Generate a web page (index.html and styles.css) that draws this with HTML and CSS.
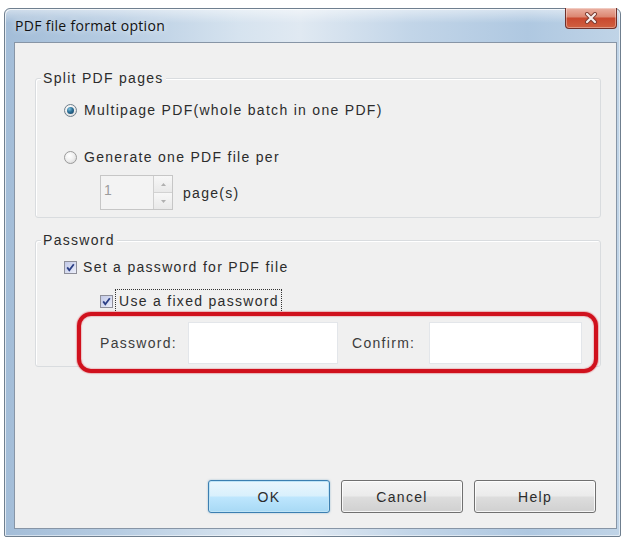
FILE: index.html
```html
<!DOCTYPE html>
<html lang="en">
<head>
<meta charset="utf-8">
<title>PDF file format option</title>
<link rel="stylesheet" href="styles.css">
</head>
<body>
<div class="window">
  <div class="titlebar">
    <span class="title">PDF file format option</span>
    <span class="close">
      <svg width="16" height="12" viewBox="0 0 16 12">
        <path d="M4 2 L12 10 M12 2 L4 10" stroke="#7a3a30" stroke-width="4" stroke-linecap="round"/>
        <path d="M4 2 L12 10 M12 2 L4 10" stroke="#f6eeee" stroke-width="2.2" stroke-linecap="round"/>
      </svg>
    </span>
  </div>
  <div class="client">
    <div class="group split">
      <div class="legend">Split PDF pages</div>
      <div class="opt first">
        <span class="radio on"></span>
        <span>Multipage PDF(whole batch in one PDF)</span>
      </div>
      <div class="opt second">
        <span class="radio"></span>
        <span>Generate one PDF file per</span>
      </div>
      <div class="spinrow">
        <div class="spin">
          <span class="val">1</span>
          <span class="arrows">
            <span class="half"><svg width="5" height="3" viewBox="0 0 5 3"><path d="M0 3 L2.5 0 L5 3 Z" fill="#b0b0b0"/></svg></span>
            <span class="half"><svg width="5" height="3" viewBox="0 0 5 3"><path d="M0 0 L2.5 3 L5 0 Z" fill="#b0b0b0"/></svg></span>
          </span>
        </div>
        <span class="pages">page(s)</span>
      </div>
    </div>
    <div class="group pw">
      <div class="legend">Password</div>
      <div class="opt chk1">
        <span class="check"><svg width="11" height="11" viewBox="0 0 11 11"><path d="M2.2 5.4 L4.3 8.2 L8.8 2.2" fill="none" stroke="#2b3f86" stroke-width="1.8"/></svg></span>
        <span>Set a password for PDF file</span>
      </div>
      <div class="opt chk2">
        <span class="check"><svg width="11" height="11" viewBox="0 0 11 11"><path d="M2.2 5.4 L4.3 8.2 L8.8 2.2" fill="none" stroke="#2b3f86" stroke-width="1.8"/></svg></span>
        <span class="focus">Use a fixed password</span>
      </div>
      <div class="pwrow">
        <span class="lbl lbl-pw">Password:</span>
        <span class="field field-pw"></span>
        <span class="lbl lbl-cf">Confirm:</span>
        <span class="field field-cf"></span>
      </div>
    </div>
    <div class="buttons">
      <button class="btn default" type="button">OK</button>
      <button class="btn" type="button">Cancel</button>
      <button class="btn" type="button">Help</button>
    </div>
  </div>
</div>
</body>
</html>
```
FILE: styles.css
```css
html, body {
  margin: 0;
  padding: 0;
  background: #ffffff;
}

body {
  width: 626px;
  height: 540px;
  overflow: hidden;
  font-family: "Liberation Sans", Arial, sans-serif;
}

.window {
  margin: 8px 0 0 4px;
  width: 617px;
  height: 529px;
  box-sizing: border-box;
  border: 1px solid #6f7f8f;
  border-radius: 6px 6px 2px 2px;
  padding: 0 3px 7px 9px;
  display: flex;
  flex-direction: column;
  background:
    linear-gradient(180deg, rgba(255,255,255,0.5) 0px, rgba(255,255,255,0) 14px),
    linear-gradient(90deg, #a3bdd8 0%, #b6cce2 18%, #d6e3ef 38%, #e0e9f2 48%, #c2d5e8 66%, #afc8e1 85%, #c0d4e7 100%);
  box-shadow: inset 1px 1px 0 rgba(255,255,255,0.7), inset -1px -1px 0 rgba(255,255,255,0.5);
}

.titlebar {
  height: 33px;
  display: flex;
  justify-content: space-between;
  align-items: flex-start;
}

.title {
  padding-left: 1px;
  line-height: 33px;
  font-family: "Open Sans", "Noto Sans", sans-serif;
  font-size: 14px;
  letter-spacing: 0.3px;
  color: #111;
  text-shadow: 0 0 6px rgba(255,255,255,0.9);
}

.close {
  margin: -1px 0 0 0;
  width: 52px;
  height: 21px;
  box-sizing: border-box;
  border: 1px solid #70302a;
  border-top: none;
  border-radius: 0 0 4px 4px;
  background: linear-gradient(180deg, #eab1a3 0%, #dc8671 45%, #c9482f 50%, #d06040 100%);
  box-shadow: inset 0 0 0 1px rgba(255,255,255,0.35);
  display: flex;
  align-items: center;
  justify-content: center;
}

.client {
  flex: 1;
  border: 1px solid #8795a6;
  background: #f0f0f0;
  display: flex;
  flex-direction: column;
  font-size: 14px;
  letter-spacing: 1.3px;
  color: #2c2c2c;
}

.group {
  margin-left: 20px;
  width: 566px;
  box-sizing: border-box;
  border: 1px solid #d9dcdf;
  border-radius: 3px;
  box-shadow: inset 1px 1px 0 #ffffff;
  padding-left: 28px;
}

.split {
  margin-top: 35px;
  padding-bottom: 7px;
}

.pw {
  margin-top: 22px;
  padding-bottom: 0;
}

.legend {
  display: block;
  width: max-content;
  margin: -9px 0 0 -23px;
  padding: 0 2px;
  line-height: 16px;
  height: 16px;
  background: #f0f0f0;
}

.opt {
  display: flex;
  align-items: center;
  height: 20px;
  line-height: 20px;
  white-space: nowrap;
}

.opt.first { margin-top: 14px; }
.opt.second { margin-top: 27px; }
.opt.chk1 { margin-top: 9px; }
.opt.chk2 { margin-top: 14px; padding-left: 36px; }

.radio {
  width: 13px;
  height: 13px;
  box-sizing: border-box;
  border-radius: 50%;
  border: 1px solid #9a9a9a;
  background: radial-gradient(circle at 40% 35%, #ffffff 0%, #f0f0f0 45%, #d2d2d2 100%);
  margin-right: 7px;
  display: flex;
  align-items: center;
  justify-content: center;
  flex: none;
}

.radio.on {
  border-color: #6f7f8c;
}

.radio.on::after {
  content: "";
  width: 7px;
  height: 7px;
  border-radius: 50%;
  background: radial-gradient(circle at 35% 30%, #7fc3e0 0%, #2c6f96 45%, #133a5a 100%);
}

.spinrow {
  margin-top: 8px;
  padding-left: 36px;
  display: flex;
  align-items: center;
  height: 35px;
}

.spin {
  width: 73px;
  height: 35px;
  box-sizing: border-box;
  border: 1px solid #c6c6c6;
  background: #f3f3f3;
  display: flex;
}

.val {
  flex: 1;
  color: #9c9c9c;
  padding: 6px 0 0 3px;
  line-height: 16px;
}

.arrows {
  width: 18px;
  display: flex;
  flex-direction: column;
  border-left: 1px solid #cfcfcf;
}

.half {
  flex: 1;
  display: flex;
  align-items: center;
  justify-content: center;
  background: linear-gradient(180deg, #f7f7f7, #e9e9e9);
}

.half + .half {
  border-top: 1px solid #d2d2d2;
}

.pages {
  margin-left: 10px;
}

.check {
  width: 13px;
  height: 13px;
  box-sizing: border-box;
  border: 1px solid #8e8f9a;
  background: linear-gradient(135deg, #c2c9e6 0%, #d9def2 60%, #eef0fa 100%);
  margin-right: 6px;
  display: flex;
  align-items: center;
  justify-content: center;
  flex: none;
}

.chk2 .check {
  margin-right: 4px;
}

.focus {
  display: inline-block;
  line-height: 20px;
  padding: 0 1px 0 2px;
  outline: 1px dotted #333;
  outline-offset: 1px;
}

.pwrow {
  margin: 1px 0 -7px 13px;
  width: 521px;
  height: 61px;
  box-sizing: border-box;
  border: 4px solid #d0111d;
  border-radius: 14px;
  background: #f0f0f0;
  box-shadow: 0 0 1px 1px rgba(220,60,70,0.35), inset 0 0 1px 1px rgba(220,60,70,0.25);
  display: flex;
  align-items: center;
  padding-left: 19px;
  position: relative;
}

.lbl {
  color: #3c3c3c;
  white-space: nowrap;
}

.lbl-pw { width: 88px; }
.lbl-cf { width: 77px; margin-left: 14px; }

.field {
  height: 42px;
  box-sizing: border-box;
  border: 1px solid #e3e6ea;
  background: #ffffff;
}

.field-pw { width: 150px; }
.field-cf { width: 153px; }

.buttons {
  margin-top: auto;
  display: flex;
  justify-content: flex-end;
  gap: 11px;
  padding: 0 20px 15px 0;
}

.btn {
  width: 122px;
  height: 33px;
  box-sizing: border-box;
  border: 1px solid #707070;
  border-radius: 3px;
  background: linear-gradient(180deg, #f4f4f4 0%, #ebebeb 48%, #dddddd 52%, #d0d0d0 100%);
  box-shadow: inset 0 0 0 1px rgba(255,255,255,0.8);
  font-family: "Liberation Sans", Arial, sans-serif;
  font-size: 14px;
  letter-spacing: 1.3px;
  color: #2c2c2c;
  padding: 0;
}

.btn.default {
  border-color: #3c7fb1;
  background: linear-gradient(180deg, #eaf6fd 0%, #d9f0fc 48%, #bee6fd 52%, #a7d9f5 100%);
  box-shadow: inset 0 0 0 1px #bfe4f7, 0 0 2px rgba(60,127,177,0.5);
}
```
